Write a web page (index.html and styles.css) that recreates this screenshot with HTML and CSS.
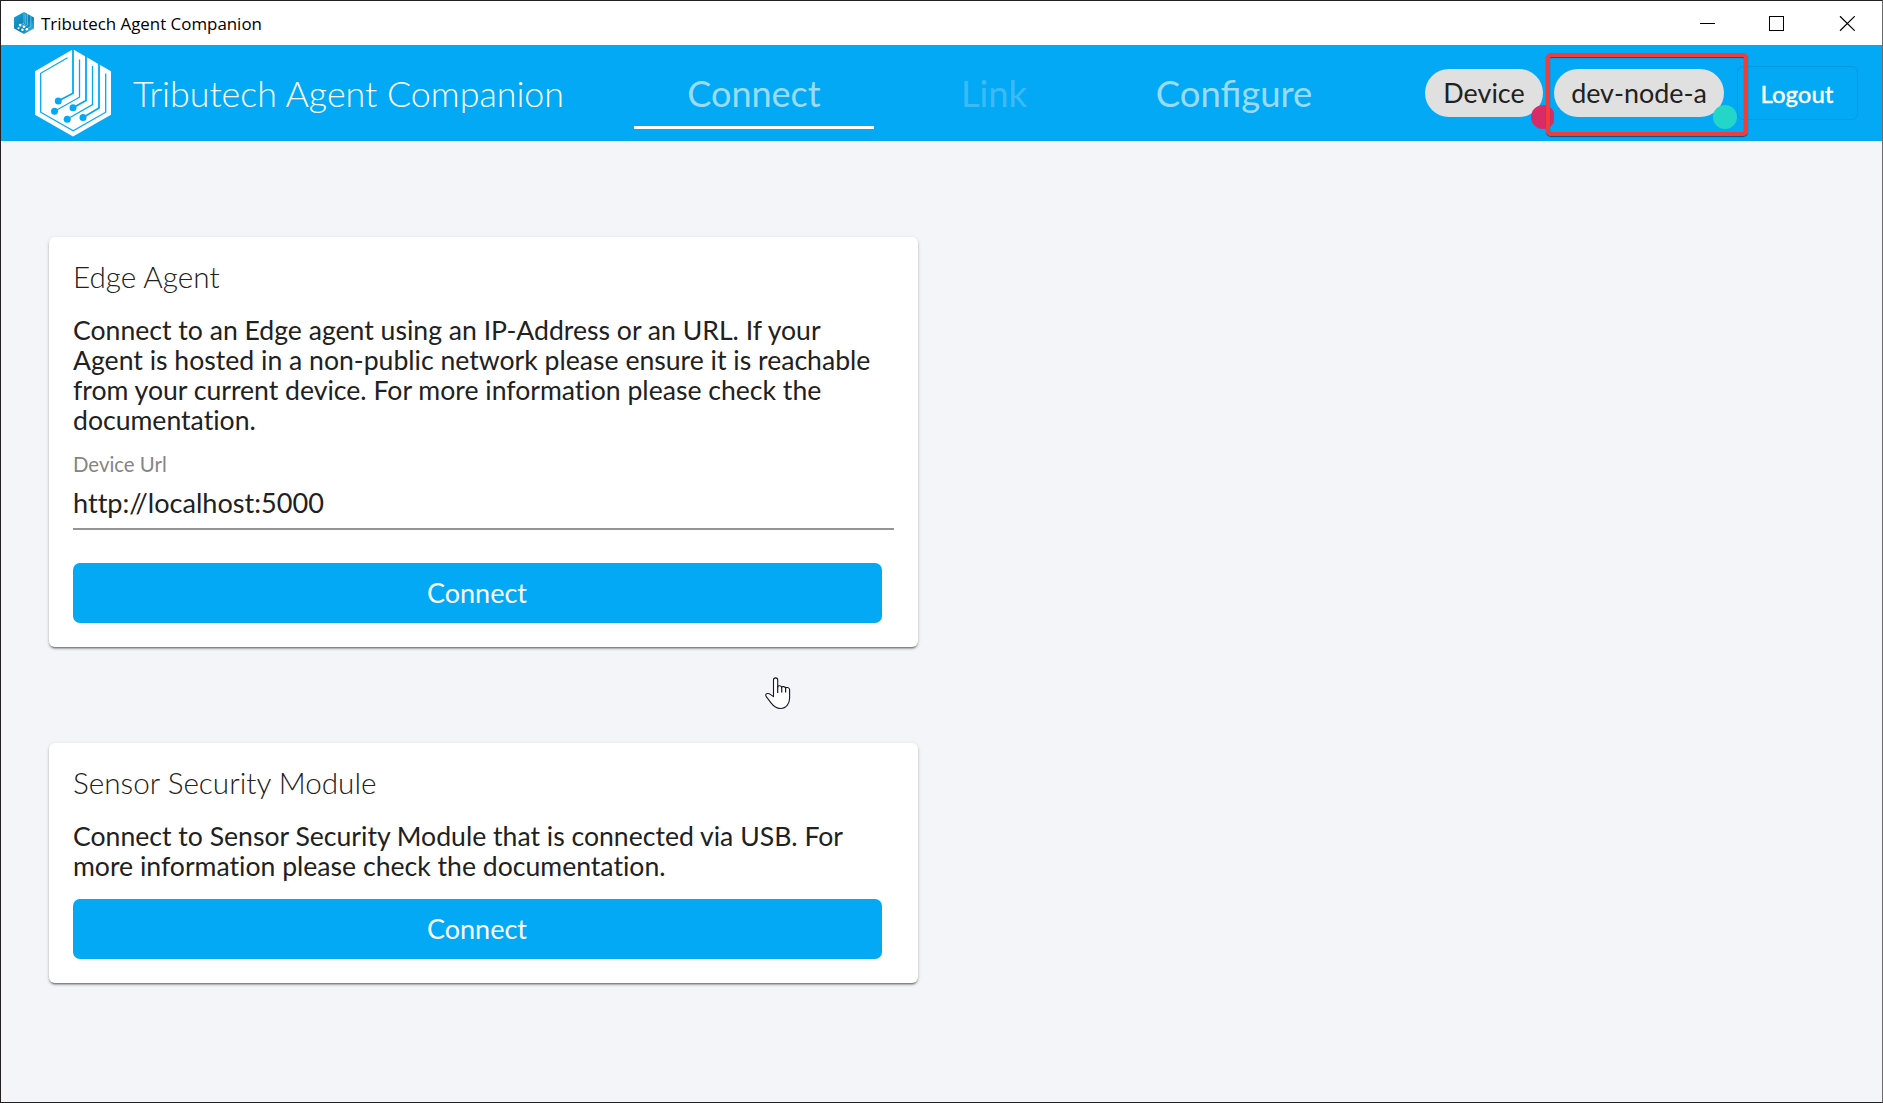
FILE: index.html
```html
<!DOCTYPE html>
<html lang="en">
<head>
<meta charset="utf-8">
<title>Tributech Agent Companion</title>
<link rel="stylesheet" href="styles.css">
</head>
<body>
<div class="window">
  <div class="titlebar">
    <svg class="app-icon" viewBox="35 49 76 88" preserveAspectRatio="none">
      <defs><linearGradient id="g" x1="0" y1="0" x2="1" y2="1"><stop offset="0" stop-color="#18a4dc"/><stop offset=".55" stop-color="#0b7fb4"/><stop offset="1" stop-color="#49b9e2"/></linearGradient></defs>
      <path fill="url(#g)" d="M73 49l38 22v44l-38 21.500-38-21.500V71z"/>
      <path fill="none" stroke="#6fd0f2" stroke-width="3" d="M73 49v45l-15 7M86 57v44l-13 7M99 64v44l-16 9M79.500 58v39l-25 14"/>
      <g fill="#fff"><circle cx="58" cy="101" r="5"/><circle cx="52" cy="114" r="4"/><circle cx="73" cy="108" r="5"/><circle cx="67" cy="120" r="5"/><circle cx="84" cy="118" r="5"/></g>
    </svg>
    <span class="window-title">Tributech Agent Companion</span>
    <svg class="window-controls" viewBox="0 0 155 15" fill="none" stroke="#000" shape-rendering="crispEdges">
      <path d="M0 7.500h15M69.500.5h14v14h-14z"/>
      <path shape-rendering="auto" stroke-width="1.200" d="M140 .2l14.800 14.600M154.800.2L140 14.800"/>
    </svg>
  </div>
  <header class="header">
    <svg class="logo" viewBox="35 49 76 88">
      <path fill="#fff" d="M73 49.300L111 71.200v43.600L73 136.500 35 114.800V71.200z"/>
      <g fill="none" stroke="#03a9f5" stroke-width="1.300">
        <path d="M67.500 57.800L40.700 73.300v38.900L73.200 130.800l32.500-18.600V73.500"/>
        <path d="M79.500 59.500v37.700L54.500 111.200M92.500 66v38.500L67 119.200"/>
        <path stroke-width="1.800" d="M73 48v45.300L58.300 101M86 54v46.500L73 107.800M99 61v47L83 117.500"/>
      </g>
      <g fill="#03a9f5"><circle cx="58.300" cy="101" r="3.500"/><circle cx="54.500" cy="111.200" r="3.500"/><circle cx="73" cy="107.800" r="3.500"/><circle cx="67.200" cy="119.300" r="3.500"/><circle cx="83" cy="117.500" r="3.500"/></g>
    </svg>
    <h1 class="brand">Tributech Agent Companion</h1>
    <nav class="tabs">
      <a class="tab active">Connect</a>
      <a class="tab disabled">Link</a>
      <a class="tab">Configure</a>
    </nav>
    <div class="status">
      <span class="chip device">Device<i class="dot offline"></i></span>
      <span class="chip node">dev-node-a<i class="dot online"></i><i class="highlight"></i></span>
      <button class="logout">Logout</button>
    </div>
  </header>
  <main class="content">
    <section class="card">
      <h2>Edge Agent</h2>
      <p>Connect to an Edge agent using an IP-Address or an URL. If your<br>Agent is hosted in a non-public network please ensure it is reachable<br>from your current device. For more information please check the<br>documentation.</p>
      <div class="field">
        <div class="label">Device Url</div>
        <div class="value">http://localhost:5000</div>
      </div>
      <button class="connect">Connect</button>
    </section>
    <section class="card">
      <h2>Sensor Security Module</h2>
      <p>Connect to Sensor Security Module that is connected via USB. For<br>more information please check the documentation.</p>
      <button class="connect">Connect</button>
    </section>
  </main>
  <svg class="pointer" viewBox="0 0 26 33">
    <path fill="#fff" stroke="#15152a" stroke-width="1.100" stroke-linejoin="round" d="M8.500 19.600V3a2.100 2.100 0 0 1 4.200 0v7.200q0-1.600 2-1.400 2 .2 2 1.800 0-1.300 2-1 1.900.3 1.900 1.700 0-1.100 2-.8 2 .4 2 2.100V21c0 5-3 10.500-9.300 10.500-4.800 0-7.300-3-9.300-5.600L1.300 19.700Q0 17.600 1.600 16.800q2-.8 4 .8z"/>
    <path fill="none" stroke="#15152a" stroke-width="1.200" d="M12.700 9v7M16.700 10v5.500M20.600 11v4.500"/>
  </svg>
</div>
</body>
</html>
```
FILE: styles.css
```css
* { box-sizing: border-box; }
body {
  margin: 0;
  font-family: Lato, "Liberation Sans", sans-serif;
  color: #212121;
}
.window {
  position: relative;
  height: 1103px;
  overflow: hidden;
  display: flex;
  flex-direction: column;
  background: #f4f5f9;
  border: 1px solid #231f20;
  border-right-color: #6b6b6b;
}
.titlebar {
  height: 44px;
  flex: none;
  display: flex;
  align-items: center;
  padding: 0 27px 0 13px;
  background: #fff;
}
.app-icon { width: 20px; height: 22px; margin-right: 7px; }
.window-title {
  padding-top: 1px;
  font: 16.9px/24px "Open Sans", "Noto Sans", sans-serif;
  color: #000;
}
.window-controls { width: 155px; height: 15px; margin-left: auto; }
.header {
  height: 96px;
  flex: none;
  display: flex;
  align-items: center;
  padding: 0 24px 0 34px;
  background: #03a9f5;
  color: #fff;
}
.logo { width: 76px; height: 88px; flex: none; }
.brand {
  width: 501px;
  margin: 0 0 0 22px;
  padding-top: 2px;
  font-size: 35.8px;
  font-weight: 300;
  line-height: 44px;
  white-space: nowrap;
}
.tabs { display: flex; }
.tab {
  width: 240px;
  height: 72px;
  line-height: 73px;
  font-size: 36.4px;
  text-align: center;
  color: rgba(255, 255, 255, .6);
}
.tab.active { font-size: 36px; box-shadow: inset 0 -3px #fff; }
.tab.disabled { color: rgba(255, 255, 255, .24); }
.status {
  margin-left: auto;
  display: flex;
  align-items: center;
}
.chip {
  position: relative;
  height: 48px;
  line-height: 48px;
  border-radius: 24px;
  background: #e0e0e0;
  color: #212121;
  font-size: 26.9px;
  text-align: center;
}
.device { width: 118px; margin-right: 11px; }
.node { width: 170px; margin-right: 13px; }
.dot {
  position: absolute;
  right: -12px;
  bottom: -12px;
  width: 24px;
  height: 24px;
  border-radius: 50%;
}
.offline { background: #d82c68; clip-path: inset(0 1px 0 0); }
.online { background: #24d6c8; right: -13px; }
.highlight {
  position: absolute;
  z-index: 1;
  left: -8px;
  top: -16px;
  width: 202px;
  height: 83px;
  border: 4px solid #f23c3c;
  border-radius: 5px;
  box-shadow: 0 1px 1px rgba(20, 30, 50, .65), inset 0 1px 1px rgba(20, 30, 50, .65);
}
.logout {
  width: 121px;
  height: 54px;
  padding: 1px 1px 0 0;
  border: 1px solid #0599dd;
  border-radius: 6px;
  background: none;
  color: #fff;
  font: 500 23.9px Lato, sans-serif;
  -webkit-text-stroke: .3px #fff;
}
.content {
  display: flex;
  flex-direction: column;
  align-items: flex-start;
  gap: 96px;
  padding: 96px 48px;
}
.card {
  width: 869px;
  padding: 24px;
  border-radius: 6px;
  background: #fff;
  box-shadow: 0 3px 1px -2px rgba(0, 0, 0, .25), 0 2px 2px rgba(0, 0, 0, .25), 0 1px 4px rgba(0, 0, 0, .12);
}
h2 {
  margin: 0 0 23px;
  font-size: 29.7px;
  font-weight: 300;
  line-height: 31px;
}
p {
  margin: 0;
  font-size: 26.6px;
  line-height: 30px;
  white-space: nowrap;
  font-variant-ligatures: none;
}
.field {
  margin: 17px 0 33px;
  border-bottom: 2px solid #949494;
  padding-bottom: 10px;
  font-variant-ligatures: none;
}
.label {
  margin-bottom: 12px;
  font-size: 20.4px;
  line-height: 24px;
  color: #858585;
}
.value { font-size: 27.1px; line-height: 30px; }
.connect {
  display: block;
  width: 809px;
  height: 60px;
  padding: 0 1px 2px 0;
  border: 0;
  border-radius: 7px;
  background: #03a9f5;
  color: #fff;
  font: 400 27px Lato, sans-serif;
}
p + .connect { margin-top: 18px; }
.pointer {
  position: absolute;
  left: 764px;
  top: 676px;
  width: 26px;
  height: 33px;
}
```
